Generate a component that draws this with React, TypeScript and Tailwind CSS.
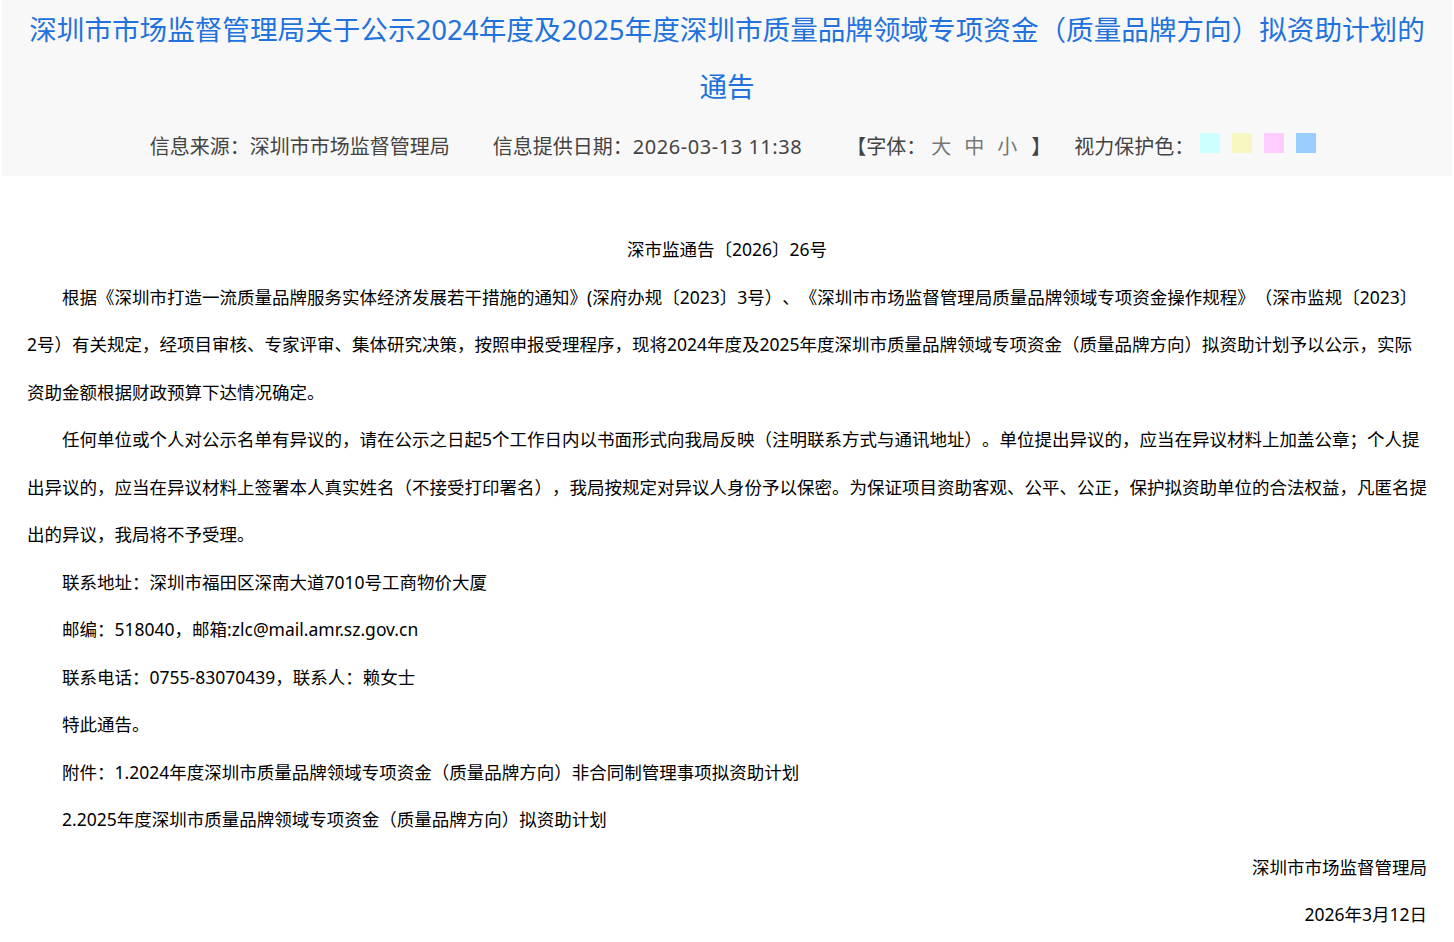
const swatches = ["bg-[#ccffff]", "bg-[#f7f7c2]", "bg-[#ffccff]", "bg-[#99ccff]"];

const paragraphs = [
  "根据《深圳市打造一流质量品牌服务实体经济发展若干措施的通知》(深府办规〔2023〕3号）、《深圳市市场监督管理局质量品牌领域专项资金操作规程》（深市监规〔2023〕2号）有关规定，经项目审核、专家评审、集体研究决策，按照申报受理程序，现将2024年度及2025年度深圳市质量品牌领域专项资金（质量品牌方向）拟资助计划予以公示，实际资助金额根据财政预算下达情况确定。",
  "任何单位或个人对公示名单有异议的，请在公示之日起5个工作日内以书面形式向我局反映（注明联系方式与通讯地址）。单位提出异议的，应当在异议材料上加盖公章；个人提出异议的，应当在异议材料上签署本人真实姓名（不接受打印署名），我局按规定对异议人身份予以保密。为保证项目资助客观、公平、公正，保护拟资助单位的合法权益，凡匿名提出的异议，我局将不予受理。",
  "联系地址：深圳市福田区深南大道7010号工商物价大厦",
  "邮编：518040，邮箱:zlc@mail.amr.sz.gov.cn",
  "联系电话：0755-83070439，联系人：赖女士",
  "特此通告。",
  "附件：1.2024年度深圳市质量品牌领域专项资金（质量品牌方向）非合同制管理事项拟资助计划",
  "2.2025年度深圳市质量品牌领域专项资金（质量品牌方向）拟资助计划",
];

export default function App() {
  return (
    <div className="w-[1454px] h-[942px] overflow-hidden bg-white font-['Noto_Sans','Noto_Sans_CJK_SC',sans-serif] [text-spacing-trim:space-all] text-[#333]">
      <div className="mx-[2px] h-[176px] bg-[#f8f8f8] text-center">
        <h1 className="px-[20px] pt-[1px] text-[27.6px] leading-[57px] font-normal text-[#2272dd]">
          深圳市市场监督管理局关于公示2024年度及2025年度深圳市质量品牌领域专项资金（质量品牌方向）拟资助计划的通告
        </h1>
        <div className="flex justify-center h-[61px] pt-[19px] pl-[12px] text-[20px] leading-[26px] text-[#444]">
          <span>信息来源：深圳市市场监督管理局</span>
          <span className="ml-[43px]">
            信息提供日期：<span className="tracking-[0.55px]">2026-03-13 11:38</span>
          </span>
          <span className="ml-[44px]">【字体：</span>
          <span className="ml-[5px] text-[#777] flex gap-[13px]">
            <span>大</span>
            <span>中</span>
            <span>小</span>
          </span>
          <span className="ml-[14px]">】</span>
          <span className="ml-[23px]">视力保护色：</span>
          <div className="flex gap-[12px] ml-[6px] -mt-[1px]">
            {swatches.map((c) => (
              <span key={c} className={`w-[20px] h-[20px] ${c}`} />
            ))}
          </div>
        </div>
      </div>
      <div className="px-[27px] pt-[50px] text-[17.5px] leading-[47.5px] text-black">
        <p className="text-center">深市监通告〔2026〕26号</p>
        {paragraphs.map((t) => (
          <p key={t} className="indent-[35px]">{t}</p>
        ))}
        <p className="text-right">深圳市市场监督管理局</p>
        <p className="text-right">2026年3月12日</p>
      </div>
    </div>
  );
}
